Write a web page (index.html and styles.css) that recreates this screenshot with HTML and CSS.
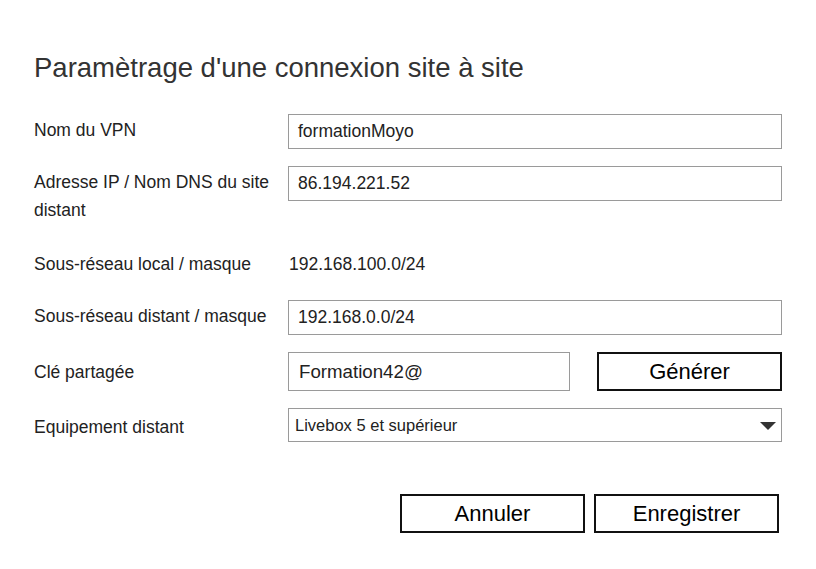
FILE: index.html
```html
<!DOCTYPE html>
<html lang="fr">
<head>
<meta charset="utf-8">
<title>Paramètrage d'une connexion site à site</title>
<link rel="stylesheet" href="styles.css">
</head>
<body>
<div class="dialog">
  <h1 class="title">Paramètrage d'une connexion site à site</h1>
  <div class="form">
    <div class="row">
      <div class="label">Nom du VPN</div>
      <div class="input">formationMoyo</div>
    </div>
    <div class="row">
      <div class="label">Adresse IP / Nom DNS du site distant</div>
      <div class="input">86.194.221.52</div>
    </div>
    <div class="row row-static">
      <div class="label">Sous-réseau local / masque</div>
      <div class="value">192.168.100.0/24</div>
    </div>
    <div class="row">
      <div class="label">Sous-réseau distant / masque</div>
      <div class="input">192.168.0.0/24</div>
    </div>
    <div class="row row-center">
      <div class="label">Clé partagée</div>
      <div class="key-group">
        <div class="input input-key">Formation42@</div>
        <button class="btn btn-gen" type="button">Générer</button>
      </div>
    </div>
    <div class="row row-center">
      <div class="label label-low">Equipement distant</div>
      <div class="select">
        <span class="select-text">Livebox 5 et supérieur</span>
        <svg class="caret" width="16" height="8" viewBox="0 0 16 8"><path d="M0 0 H16 L8 8 Z" fill="#333"/></svg>
      </div>
    </div>
  </div>
  <div class="footer">
    <button class="btn" type="button">Annuler</button>
    <button class="btn" type="button">Enregistrer</button>
  </div>
</div>
</body>
</html>
```
FILE: styles.css
```css
html, body {
  margin: 0;
  padding: 0;
  background: #ffffff;
}
body {
  font-family: "Liberation Sans", Arial, sans-serif;
  color: #222222;
}
.dialog {
  padding: 52px 34px 0 34px;
}
.title {
  margin: 0;
  font-size: 27.5px;
  line-height: 32px;
  font-weight: normal;
  color: #333333;
}
.form {
  margin-top: 30px;
  display: flex;
  flex-direction: column;
  gap: 17px;
}
.row {
  display: grid;
  grid-template-columns: 254px 1fr;
  align-items: start;
}
.row-center {
  align-items: center;
}
.row-static {
  padding: 9px 0 5px 0;
}
.label {
  font-size: 17.5px;
  line-height: 28px;
  padding-top: 2px;
  padding-right: 12px;
  color: #222222;
}
.row-center .label,
.row-static .label {
  padding-top: 0;
}
.row-center .label-low {
  padding-top: 4px;
}
.value {
  font-size: 17.5px;
  line-height: 28px;
  padding-left: 1px;
  color: #222222;
}
.input {
  box-sizing: border-box;
  height: 35px;
  border: 1px solid #9a9a9a;
  padding: 0 9px;
  display: flex;
  align-items: center;
  font-size: 17.5px;
  color: #222222;
}
.key-group {
  display: flex;
  align-items: center;
}
.input-key {
  flex: 0 0 282px;
  height: 39px;
  font-size: 18.7px;
  padding-left: 10px;
}
.btn {
  box-sizing: border-box;
  width: 185px;
  height: 39px;
  border: 2px solid #111111;
  background: #ffffff;
  font-family: "Liberation Sans", Arial, sans-serif;
  font-size: 22px;
  color: #000000;
  padding: 0;
  margin: 0;
}
.btn-gen {
  margin-left: auto;
}
.select {
  box-sizing: border-box;
  height: 34px;
  border: 1px solid #9a9a9a;
  padding: 0 5px 0 6px;
  display: flex;
  align-items: center;
  justify-content: space-between;
}
.select-text {
  font-size: 16.5px;
  color: #222222;
}
.caret {
  display: block;
  margin-top: 1px;
}
.footer {
  margin-top: 52px;
  display: flex;
  justify-content: flex-end;
  gap: 9px;
  padding-right: 3px;
}
```
